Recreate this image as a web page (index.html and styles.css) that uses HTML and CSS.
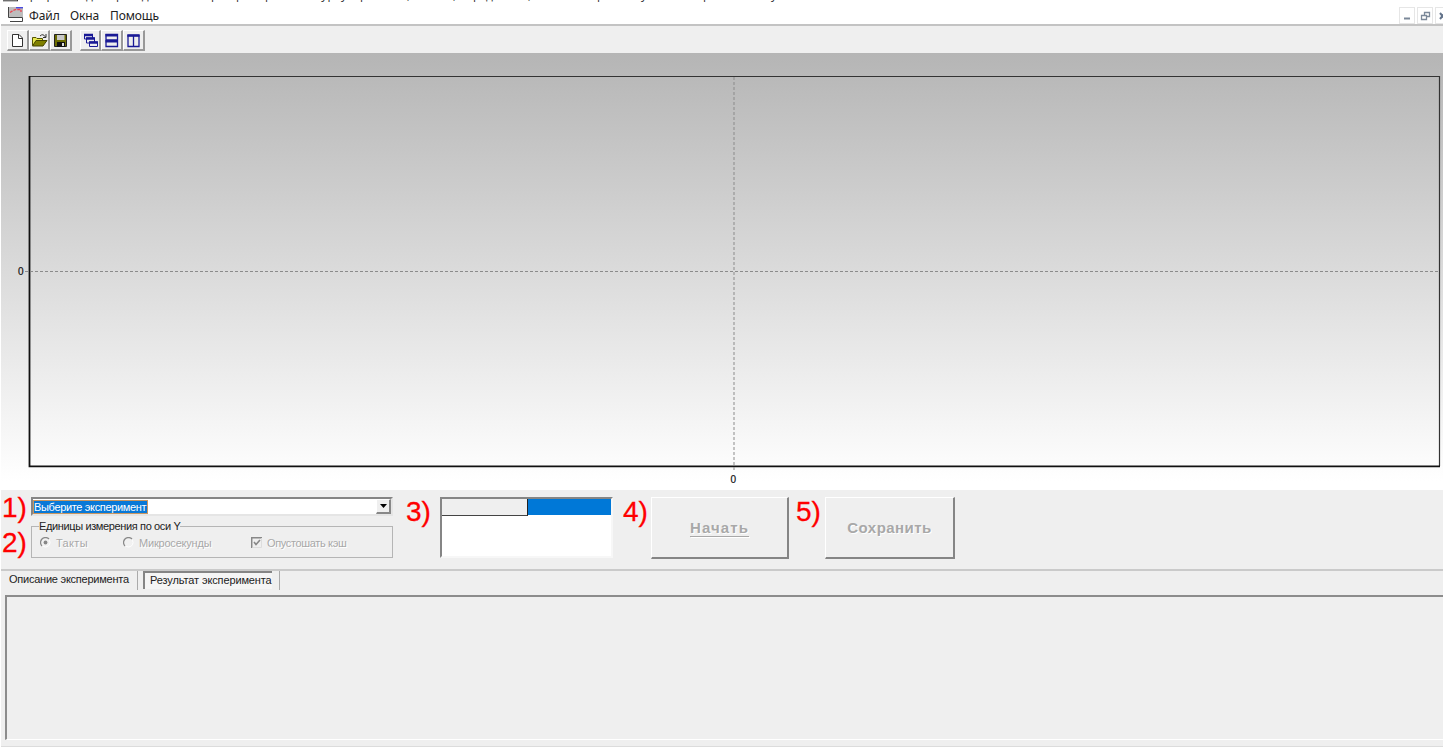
FILE: index.html
```
<!DOCTYPE html>
<html lang="ru">
<head>
<meta charset="utf-8">
<title>Эксперименты</title>
<link rel="stylesheet" href="styles.css">
</head>
<body>
<div class="app">
  <header class="head">
    <div class="caption">
      <svg class="caption-art" width="800" height="3" viewBox="0 0 800 3">
        <path d="M3 0.8H18M17.5 0V1" stroke="#333" fill="none"/>
        <g class="caption-text">
          <text x="22" y="-1" textLength="59">Программа</text>
          <text x="86" y="-1" textLength="20">для</text>
          <text x="109" y="-1" textLength="66">проведения</text>
          <text x="211" y="-1">р</text><text x="236" y="-1">р</text><text x="265" y="-1">р</text>
          <text x="315" y="-1" textLength="32">курсу</text>
          <text x="360" y="-1">р</text><text x="407" y="-1">,</text><text x="453" y="-1">,</text>
          <text x="473" y="-1">р</text><text x="486" y="-1">д</text><text x="528" y="-1">,</text>
          <text x="597" y="-1">р</text><text x="641" y="-1">у</text><text x="703" y="-1">р</text><text x="771" y="-1">у</text>
        </g>
      </svg>
    </div>
    <div class="menubar">
      <svg class="logo" width="17" height="17" viewBox="0 0 17 17">
        <path d="M1 0H16V10H1z" fill="#bdbdbd"/>
        <path d="M1.500 0V10.500H15.500V14.500H3" fill="none" stroke="#444"/>
        <path d="M3 5.500L6 3.500L9 2.500H14V5" fill="none" stroke="#ee4450" stroke-width="1.300" stroke-dasharray="3 1"/>
        <path d="M9 .7H16" stroke="#4a4ae0" stroke-width="1.400"/>
      </svg>
      <nav class="menu"><span class="m1">Файл</span><span class="m2">Окна</span><span class="m3">Помощь</span></nav>
      <div class="winbtns">
        <span class="wb"><svg width="14" height="15"><path d="M4 10.500H10" stroke="#7b8899" stroke-width="2"/></svg></span>
        <span class="wb"><svg width="14" height="15"><path d="M6.500 7V4.500H11.500V8.500H9M6 4.500H12M3.500 7.500H8.500V11.500H3.500zM3 7.500H9" fill="none" stroke="#7b8899" stroke-width="1.300"/></svg></span>
        <span class="wb"><svg width="14" height="15"><path d="M4 5L9 11M9 5L4 11" stroke="#64748b" stroke-width="2"/></svg></span>
      </div>
    </div>
  </header>
  <div class="toolbar">
    <span class="tool"><svg width="19" height="19"><path d="M4.500 3.500H11L14.500 7V15.500H4.500z" fill="#fff" stroke="#333"/><path d="M10.500 3.500V7.500H15" fill="none" stroke="#333"/></svg></span>
    <span class="tool"><svg width="19" height="19"><path d="M2.500 14.500V6.500H6L7 7.500H12.500V9.500" fill="#e8e850" stroke="#555500"/><path d="M2.500 15L6 9.500H17L13 15z" fill="#808000" stroke="#444400"/><path d="M10 5Q13 2 15.500 6M16 3V6.500H13" fill="none" stroke="#333"/></svg></span>
    <span class="tool"><svg width="19" height="19"><path d="M3.500 3.500H15.500V15.500H3.500z" fill="#6b6b00" stroke="#222"/><path d="M6 4H13.500V9H6z" fill="#c8c8c8"/><path d="M6 11H14V16H6z" fill="#111"/><path d="M11 12H13V15H11z" fill="#ddd"/></svg></span>
    <span class="tool gap"><svg width="19" height="19"><g fill="#eee" stroke="#1a1a96"><path d="M3.500 3.500H11.500V8H3.500z"/><path d="M3 4H12" stroke-width="2.500"/><path d="M5.500 7H13.500V12H5.500z"/><path d="M5 7.500H14" stroke-width="2.500"/><path d="M8.500 11H16.500V15.500H8.500z"/><path d="M8 11.500H17" stroke-width="2.500"/></g></svg></span>
    <span class="tool"><svg width="19" height="19"><g fill="#eee" stroke="#1a1a96" stroke-width="1.300"><path d="M4 3.500H15.500V9H4zM4 9.500H15.500V15.500H4z"/><path d="M3.500 4.300H16M3.500 10.300H16" stroke-width="2.500"/></g></svg></span>
    <span class="tool"><svg width="19" height="19"><path d="M4 4.500H15V15.500H4zM9.500 4V15" fill="#eee" stroke="#1a1a96" stroke-width="1.300"/><path d="M3.300 4.500H15.600" stroke="#1a1a96" stroke-width="2.500"/></svg></span>
  </div>
  <main class="chart">
    <svg width="1442" height="437" viewBox="1 53 1442 437">
      <path d="M29 76.500H1439.500V466" fill="none" stroke="#333" stroke-width="1.200"/>
      <path d="M29.500 76V466.300H1440" fill="none" stroke="#111" stroke-width="1.800"/>
      <path d="M25 271.500H1439M734 77V471" fill="none" stroke="#8b8b8b" stroke-dasharray="3 2"/>
      <text x="18" y="274.500">0</text><text x="730.500" y="482.500">0</text>
    </svg>
  </main>
  <section class="controls">
    <div class="marks"><span>1)</span><span>2)</span></div>
    <div class="setup">
      <div class="combo"><span class="selected">Выберите эксперимент</span><span class="drop"><svg width="7" height="4"><path d="M0 0H7L3.500 4z"/></svg></span></div>
      <fieldset class="units">
        <legend>Единицы измерения по оси Y</legend>
        <div class="options">
          <svg width="11" height="11"><circle cx="5.500" cy="5.500" r="4.500" fill="#f1f1f1" stroke="#fff"/><path d="M2 9A4.700 4.700 0 0 1 9 2" fill="none" stroke="#888" stroke-width="1.300"/><circle cx="5.500" cy="5.500" r="1.900" fill="#888"/></svg>
          <span class="u1">Такты</span>
          <svg width="11" height="11"><circle cx="5.500" cy="5.500" r="4.500" fill="#f1f1f1" stroke="#fff"/><path d="M2 9A4.700 4.700 0 0 1 9 2" fill="none" stroke="#888" stroke-width="1.300"/></svg>
          <span class="u2">Микросекунды</span>
          <svg width="11" height="11"><path d="M.7 11V.7H11" fill="none" stroke="#888" stroke-width="1.500"/><path d="M1.500 10.500H10.500V1" fill="none" stroke="#ddd"/><path d="M3 5L5 7.500L9 3" fill="none" stroke="#888" stroke-width="1.600"/></svg>
          <span class="u3">Опустошать кэш</span>
        </div>
      </fieldset>
    </div>
    <span class="mark n3">3)</span>
    <div class="grid"><span class="cell fixed"></span><span class="cell active"></span></div>
    <span class="mark n4">4)</span>
    <div class="button start"><u>Начать</u></div>
    <span class="mark n5">5)</span>
    <div class="button save"><span>Сохранить</span></div>
  </section>
  <div class="tabs"><div class="tab"><span class="t1">Описание эксперимента</span></div><div class="tab on"><span class="t2">Результат эксперимента</span></div></div>
  <section class="result"><div class="memo"></div></section>
</div>
</body>
</html>
```
FILE: styles.css
```
* { box-sizing: border-box; }
body { margin: 0; background: #fff; overflow: hidden; font-family: "Liberation Sans", Arial, sans-serif; font-size: 11px; color: #222; }
svg { display: block; flex: none; }
.app { width: 1443px; height: 747px; padding-left: 1px; display: flex; flex-direction: column; overflow: hidden; }
.head { height: 26px; flex: none; border-bottom: 2px solid #c3c3c3; background: #fff; }
.caption { height: 3px; overflow: hidden; margin-left: -1px; }
.caption-text { font: 12px "Open Sans", sans-serif; fill: #333; }
.menubar { height: 21px; display: flex; }
.logo { margin: 4px 0 0 6px; }
.menu { display: flex; font: 12px/16px "Noto Sans", sans-serif; padding: 5px 0 0 5px; white-space: nowrap; color: #222; letter-spacing: -.1px; }
.menu span { display: block; }
.m1 { width: 41px; }
.m2 { width: 40px; }
.winbtns { margin-left: auto; display: flex; gap: 2px; margin-top: 4px; margin-right: -8px; }
.wb { width: 16px; height: 17px; border: 1px solid #e6e6e6; }
.toolbar { height: 27px; flex: none; background: #efefef; display: flex; padding: 4px 0 0 6px; }
.tool { width: 21.6px; height: 21px; border: 1px solid #fff; border-right: 2px solid #999; border-bottom: 2px solid #999; }
.gap { margin-left: 8px; }
.chart { height: 437px; flex: none; background: linear-gradient(#b5b5b5, #fff 98%); }
.chart text { font-size: 10px; fill: #111; stroke: #111; stroke-width: .2px; }
.controls { height: 79px; flex: none; background: #efefef; display: flex; align-items: flex-start; padding-top: 7px; }
.marks, .mark { color: #f00; font-size: 28px; white-space: nowrap; -webkit-text-stroke: .3px #f00; }
.marks { width: 30px; height: 70px; line-height: 35px; margin-top: -7px; padding-left: 1px; }
.marks span { display: block; height: 35px; }
.setup { width: 362px; }
.combo { height: 19px; background: #fff; border: 2px solid #858585; border-right-color: #e5e5e5; border-bottom-color: #e5e5e5; display: flex; justify-content: space-between; align-items: center; }
.selected { background: #0878d7; color: #fff; height: 14px; line-height: 15px; outline: 1px solid #c99660; outline-offset: -1px; width: 115px; white-space: nowrap; letter-spacing: -.34px; padding-left: 1px; }
.drop { width: 15px; height: 15px; background: #efefef; border: 1px solid #fff; border-right: 2px solid #888; border-bottom: 2px solid #888; display: flex; align-items: center; justify-content: center; }
.units { height: 38px; margin: 4px 0 0; padding: 0 0 0 8px; border: 1px solid #b5b5b5; color: #a8a8a8; text-shadow: 1px 1px #fff; min-width: 0; white-space: nowrap; }
.units legend { color: #222; padding: 0; line-height: 13px; letter-spacing: -.37px; text-shadow: none; margin-left: -1px; }
.options { display: flex; align-items: center; height: 19px; }
.u1 { width: 72px; padding-left: 5px; letter-spacing: .35px; }
.u2 { width: 117px; padding-left: 5px; letter-spacing: -.2px; }
.u3 { padding-left: 5px; letter-spacing: -.35px; }
.mark { line-height: 30px; }
.n3 { width: 34px; margin-left: 13px; }
.grid { width: 173px; height: 61px; background: #fff; border: 2px solid #858585; border-right-color: #f7f7f7; border-bottom-color: #f7f7f7; display: flex; }
.cell { height: 17px; }
.fixed { width: 86px; background: #efefef; border-right: 1px solid #222; border-bottom: 1px solid #444; }
.active { flex: 1; background: #0078d7; height: 16px; }
.n4 { width: 28px; margin-left: 10px; }
.button { height: 62px; background: #efefef; border: 1px solid #fff; border-right: 2px solid #858585; border-bottom: 2px solid #858585; color: #a8a8a8; font-weight: bold; font-size: 15px; text-shadow: 1px 1px #fff; display: flex; align-items: center; justify-content: center; }
.start { width: 138px; letter-spacing: 1.1px; }
.start u { text-decoration-thickness: 1px; text-underline-offset: 3px; }
.n5 { width: 29px; margin-left: 7px; }
.save { width: 130px; letter-spacing: .45px; }
.tabs { height: 26px; flex: none; background: #efefef; border-top: 2px solid #cacaca; display: flex; }
.tab { height: 19px; width: 137px; border-right: 1px solid #aaa; line-height: 17px; padding-left: 8px; white-space: nowrap; letter-spacing: -.24px; }
.tab.on { width: 142px; padding: 0 7px 0 5px; letter-spacing: -.12px; }
.t2 { display: block; height: 18px; border-top: 2px solid #858585; border-left: 2px solid #858585; padding-left: 5px; line-height: 15px; background: #f5f5f5; }
.result { height: 152px; flex: none; background: #efefef; padding: 0 0 6px 4px; border-bottom: 1px solid #dcdcdc; }
.memo { height: 145px; border-top: 2px solid #8c8c8c; border-left: 2px solid #8c8c8c; border-bottom: 1px solid #fff; }
```
